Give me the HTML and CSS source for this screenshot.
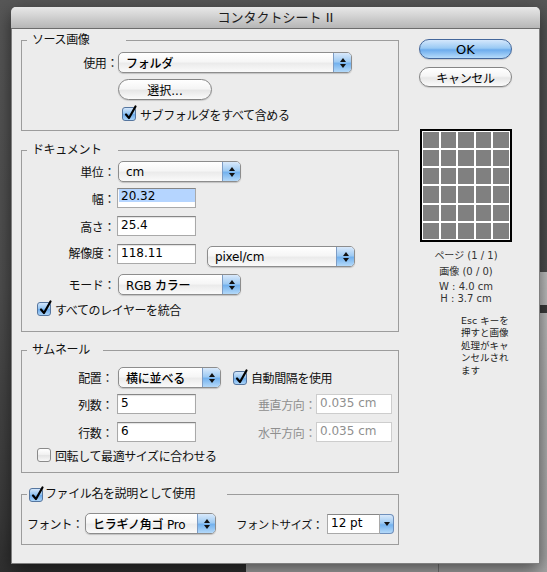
FILE: index.html
```html
<!DOCTYPE html>
<html lang="ja">
<head>
<meta charset="utf-8">
<title>コンタクトシート II</title>
<link rel="stylesheet" href="styles.css">
</head>
<body>
<div class="bgwin"><div class="bgbar"></div><div class="bgline"></div></div>
<div class="dialog">
  <div class="titlebar">コンタクトシート II</div>
  <div class="content">
    <div class="left">
      <fieldset class="grp g1">
        <legend class="lg lg1">ソース画像</legend>
        <div class="row r1a">
          <span class="lbl lbl-g1">使用：</span>
          <div class="popup w-use"><span class="val">フォルダ</span><span class="step"><i class="up"></i><i class="dn"></i></span></div>
        </div>
        <div class="row r1b"><div class="btn w-sel">選択...</div></div>
        <div class="row r1c">
          <span class="cb on"><svg width="14" height="16" viewBox="0 0 14 16"><path d="M3 9.5 L6 13 L12.5 1.5" fill="none" stroke="#000" stroke-width="2.2" stroke-linecap="round" stroke-linejoin="round"/></svg></span>
          <span class="ct">サブフォルダをすべて含める</span>
        </div>
      </fieldset>

      <fieldset class="grp g2">
        <legend class="lg lg2">ドキュメント</legend>
        <div class="row r2a">
          <span class="lbl">単位：</span>
          <div class="popup w-unit"><span class="val">cm</span><span class="step"><i class="up"></i><i class="dn"></i></span></div>
        </div>
        <div class="row r2b">
          <span class="lbl">幅：</span>
          <div class="inp"><span class="sel">20.32</span></div>
        </div>
        <div class="row r2c">
          <span class="lbl">高さ：</span>
          <div class="inp">25.4</div>
        </div>
        <div class="row r2d">
          <span class="lbl lbl-top">解像度：</span>
          <div class="inp">118.11</div>
          <div class="popup w-res"><span class="val">pixel/cm</span><span class="step"><i class="up"></i><i class="dn"></i></span></div>
        </div>
        <div class="row r2e">
          <span class="lbl">モード：</span>
          <div class="popup w-unit"><span class="val">RGB カラー</span><span class="step"><i class="up"></i><i class="dn"></i></span></div>
        </div>
        <div class="row r2f">
          <span class="cb on"><svg width="14" height="16" viewBox="0 0 14 16"><path d="M3 9.5 L6 13 L12.5 1.5" fill="none" stroke="#000" stroke-width="2.2" stroke-linecap="round" stroke-linejoin="round"/></svg></span>
          <span class="ct">すべてのレイヤーを統合</span>
        </div>
      </fieldset>

      <fieldset class="grp g3">
        <legend class="lg lg3">サムネール</legend>
        <div class="row r3a">
          <span class="lbl lbl-g3">配置：</span>
          <div class="popup w-place"><span class="val">横に並べる</span><span class="step"><i class="up"></i><i class="dn"></i></span></div>
          <span class="cb on cb-auto"><svg width="14" height="16" viewBox="0 0 14 16"><path d="M3 9.5 L6 13 L12.5 1.5" fill="none" stroke="#000" stroke-width="2.2" stroke-linecap="round" stroke-linejoin="round"/></svg></span>
          <span class="ct">自動間隔を使用</span>
        </div>
        <div class="row r3b">
          <span class="lbl lbl-g3">列数：</span>
          <div class="inp">5</div>
          <span class="lbl2">垂直方向：</span>
          <div class="inp dis">0.035 cm</div>
        </div>
        <div class="row r3c">
          <span class="lbl lbl-g3">行数：</span>
          <div class="inp">6</div>
          <span class="lbl2">水平方向：</span>
          <div class="inp dis">0.035 cm</div>
        </div>
        <div class="row r3d">
          <span class="cb off"></span>
          <span class="ct">回転して最適サイズに合わせる</span>
        </div>
      </fieldset>

      <fieldset class="grp g4">
        <legend class="lg lg4">
          <span class="cb on"><svg width="14" height="16" viewBox="0 0 14 16"><path d="M3 9.5 L6 13 L12.5 1.5" fill="none" stroke="#000" stroke-width="2.2" stroke-linecap="round" stroke-linejoin="round"/></svg></span>
          <span class="ct ct-lg">ファイル名を説明として使用</span>
        </legend>
        <div class="row r4a">
          <span class="lbl-font">フォント：</span>
          <div class="popup w-font"><span class="val">ヒラギノ角ゴ Pro</span><span class="step"><i class="up"></i><i class="dn"></i></span></div>
          <span class="lbl-size">フォントサイズ：</span>
          <div class="combo"><span class="combo-in">12 pt</span><span class="combo-btn"><i class="dn"></i></span></div>
        </div>
      </fieldset>
    </div>

    <div class="right">
      <div class="btn btn-ok">OK</div>
      <div class="btn btn-cancel">キャンセル</div>
      <div class="preview">
        <i></i><i></i><i></i><i></i><i></i>
        <i></i><i></i><i></i><i></i><i></i>
        <i></i><i></i><i></i><i></i><i></i>
        <i></i><i></i><i></i><i></i><i></i>
        <i></i><i></i><i></i><i></i><i></i>
        <i></i><i></i><i></i><i></i><i></i>
      </div>
      <div class="info info-page">ページ (1 / 1)</div>
      <div class="info info-img">画像 (0 / 0)</div>
      <div class="info info-w">W : 4.0 cm</div>
      <div class="info info-h">H : 3.7 cm</div>
      <div class="esc">Esc キーを<br>押すと画像<br>処理がキャ<br>ンセルされ<br>ます</div>
    </div>
  </div>
</div>
</body>
</html>
```

FILE: styles.css
```css
html, body {
  margin: 0;
  padding: 0;
}
body {
  width: 547px;
  height: 572px;
  overflow: hidden;
  position: relative;
  background: linear-gradient(#575757 0, #4e4e4e 50%, #3a3a3a 90%, #303030 100%);
  font-family: "DejaVu Sans", "Noto Sans CJK JP", sans-serif;
  font-size: 12px;
  color: #111;
}

/* background application window behind the dialog */
.bgwin {
  position: absolute;
  left: 246px;
  top: 272px;
  right: 0;
  bottom: 0;
  background: linear-gradient(#c4c4c4, #b4b4b4 40%, #a8a8a8);
}
.bgbar {
  position: absolute;
  left: 0;
  right: 0;
  top: 33px;
  height: 8px;
  background: #3c3c3c;
}
.bgline {
  position: absolute;
  left: 192px;
  top: 0;
  bottom: 0;
  width: 1px;
  background: #7a7a7a;
}

.dialog {
  position: relative;
  z-index: 1;
  margin: 7px 0 0 11px;
  width: 529px;
  height: 557px;
  box-sizing: border-box;
  background: #ececec;
  border: 1px solid #7f7f7f;
  border-top: none;
  border-radius: 5px 5px 0 0;
  box-shadow: 0 6px 18px rgba(0, 0, 0, 0.55);
}
.titlebar {
  height: 21px;
  border-bottom: 1px solid #6c6c6c;
  background: linear-gradient(#e8e8e8, #cfcfcf 50%, #b6b6b6);
  border-radius: 5px 5px 0 0;
  text-align: center;
  line-height: 21px;
  font-size: 13px;
  color: #1c1c1c;
  margin: 0 -1px;
}

.content {
  display: flex;
  padding-left: 9px;
}
.left {
  width: 378px;
  flex: none;
}
.right {
  width: 93px;
  margin-left: 20px;
  display: flex;
  flex-direction: column;
  flex: none;
}

/* group boxes */
.grp {
  margin: 0;
  padding: 0;
  border: 1px solid #9c9c9c;
  min-width: 0;
}
.lg {
  margin-left: 5px;
  padding: 0 0 0 5px;
  height: 15px;
  line-height: 15px;
  box-sizing: border-box;
  letter-spacing: -0.4px;
  white-space: nowrap;
}
.lg1 { width: 99px; }
.lg2 { width: 91px; }
.lg3 { width: 76px; }
.lg4 {
  width: 200px;
  padding-left: 2px;
  display: flex;
  align-items: center;
}
.g1 { margin-top: 4px; padding-bottom: 9px; }
.g2 { margin-top: 12px; padding-bottom: 15px; }
.g3 { margin-top: 11px; padding-bottom: 10px; }
.g4 { margin-top: 14px; padding-bottom: 10px; }

.row {
  display: flex;
  align-items: center;
}
.lbl {
  width: 96px;
  flex: none;
  box-sizing: border-box;
  text-align: right;
  padding-right: 3px;
  letter-spacing: -0.4px;
  white-space: nowrap;
}
.lbl-g1 { padding-right: 0; }
.lbl-g3 { padding-right: 5px; }

.r1a { margin-top: 4px; height: 21px; }
.r1b { margin-top: 6px; height: 21px; padding-left: 96px; }
.r1c { margin-top: 7px; height: 14px; padding-left: 100px; }

.r2a { margin-top: 3px; height: 21px; }
.r2b { margin-top: 6px; height: 20px; }
.r2c { margin-top: 8px; height: 20px; }
.r2d { margin-top: 8px; height: 23px; align-items: flex-start; }
.r2d .lbl-top { line-height: 20px; }
.r2d .popup { margin-top: 2px; margin-left: 11px; }
.r2e { margin-top: 7px; height: 21px; }
.r2f { margin-top: 7px; height: 14px; padding-left: 15px; }

.r3a { margin-top: 9px; height: 21px; }
.r3b { margin-top: 6px; height: 20px; }
.r3c { margin-top: 8px; height: 20px; }
.r3d { margin-top: 6px; height: 14px; padding-left: 15px; }

.r4a { margin-top: 11px; height: 21px; }

/* popup buttons */
.popup {
  height: 21px;
  box-sizing: border-box;
  border: 1px solid #8d8d8d;
  border-radius: 5px;
  background: linear-gradient(#ffffff, #f6f6f6 45%, #ebebeb 55%, #fafafa);
  box-shadow: 0 1px 1px rgba(0, 0, 0, 0.18);
  display: flex;
  align-items: center;
  padding-left: 7px;
  overflow: hidden;
  flex: none;
}
.popup .val {
  flex: 1;
  white-space: nowrap;
  color: #000;
  font-weight: 500;
  letter-spacing: -0.2px;
}
.step {
  width: 18px;
  align-self: stretch;
  box-sizing: border-box;
  background: linear-gradient(#d9e9fb, #9fcbf3 45%, #74b2ee 55%, #b4d9f9);
  border-left: 1px solid #7d9cc4;
  display: flex;
  flex-direction: column;
  align-items: center;
  justify-content: center;
  gap: 2px;
  flex: none;
}
.up {
  width: 0;
  height: 0;
  border-left: 3px solid transparent;
  border-right: 3px solid transparent;
  border-bottom: 4px solid #111;
}
.dn {
  width: 0;
  height: 0;
  border-left: 3px solid transparent;
  border-right: 3px solid transparent;
  border-top: 4px solid #111;
}
.w-use { width: 234px; }
.w-unit { width: 123px; }
.w-res { width: 148px; }
.w-place { width: 103px; }
.w-font { width: 131px; }

/* text fields */
.inp {
  width: 79px;
  height: 20px;
  box-sizing: border-box;
  margin-left: -1px;
  border: 1px solid #a9a9a9;
  border-top-color: #868686;
  background: #fff;
  box-shadow: inset 0 1px 1px rgba(0, 0, 0, 0.12);
  padding-left: 3px;
  line-height: 16px;
  color: #000;
  white-space: nowrap;
  flex: none;
}
.inp .sel {
  display: block;
  margin-left: -2px;
  margin-right: 0;
  padding-left: 2px;
  height: 13px;
  line-height: 14px;
  background: #b5d5ff;
}
.inp.dis {
  width: 76px;
  margin-left: 0;
  border-color: #cdcdcd;
  box-shadow: none;
  color: #8f8f8f;
}
.lbl2 {
  width: 120px;
  flex: none;
  text-align: right;
  color: #8f8f8f;
  letter-spacing: -0.4px;
  white-space: nowrap;
}

/* checkboxes */
.cb {
  width: 14px;
  height: 14px;
  box-sizing: border-box;
  border: 1px solid #56769f;
  border-radius: 3px;
  background: linear-gradient(#d3e6fb, #95c5f1 45%, #6eacec 55%, #acd5f9);
  position: relative;
  flex: none;
}
.cb svg {
  position: absolute;
  left: 0;
  top: -3px;
}
.cb.off {
  border-color: #8a8a8a;
  background: linear-gradient(#ffffff, #f2f2f2 45%, #e4e4e4 55%, #f8f8f8);
}
.ct {
  margin-left: 4px;
  letter-spacing: -0.4px;
  white-space: nowrap;
}
.ct-lg { margin-left: 2px; }
.cb-auto { margin-left: 12px; }

.lbl-font {
  width: 63px;
  flex: none;
  box-sizing: border-box;
  padding-left: 5px;
  letter-spacing: -0.8px;
  white-space: nowrap;
}
.lbl-size {
  width: 91px;
  margin-left: 20px;
  flex: none;
  font-size: 11.5px;
  letter-spacing: -0.6px;
  white-space: nowrap;
}
.combo {
  display: flex;
  height: 20px;
  flex: none;
}
.combo-in {
  width: 53px;
  box-sizing: border-box;
  border: 1px solid #a9a9a9;
  border-top-color: #868686;
  background: #fff;
  padding-left: 3px;
  line-height: 17px;
  color: #000;
}
.combo-btn {
  width: 14px;
  box-sizing: border-box;
  border: 1px solid #6f8fbb;
  border-left: none;
  border-radius: 0 4px 4px 0;
  background: linear-gradient(#d9e9fb, #9fcbf3 45%, #74b2ee 55%, #b4d9f9);
  display: flex;
  align-items: center;
  justify-content: center;
}

/* push buttons */
.btn {
  height: 21px;
  box-sizing: border-box;
  border: 1px solid #858585;
  border-radius: 11px;
  background: linear-gradient(#ffffff, #f5f5f5 45%, #e7e7e7 55%, #fbfbfb);
  box-shadow: 0 1px 1px rgba(0, 0, 0, 0.15);
  display: flex;
  align-items: center;
  justify-content: center;
  color: #000;
  flex: none;
}
.w-sel { width: 94px; }
.btn-ok {
  margin-top: 10px;
  height: 20px;
  font-size: 13px;
  border-color: #44679b;
  background: linear-gradient(#d4e7fc, #9acaf4 45%, #6daced 55%, #b7dcfb);
}
.btn-cancel {
  margin-top: 8px;
  height: 20px;
  letter-spacing: -0.3px;
}

/* preview */
.preview {
  margin: 42px 0 0 1px;
  width: 92px;
  height: 113px;
  box-sizing: border-box;
  border: 2px solid #000;
  background: #fff;
  padding: 1px;
  display: grid;
  grid-template-columns: repeat(5, 1fr);
  grid-template-rows: repeat(6, 1fr);
  gap: 2px;
}
.preview i {
  background: #808080;
}
.info {
  text-align: center;
  margin-left: 1px;
  width: 92px;
  font-size: 10px;
  color: #333;
  white-space: nowrap;
}
.info-page { margin-top: 7px; line-height: 14px; }
.info-img { margin-top: 2px; line-height: 14px; }
.info-w { margin-top: 2px; line-height: 12px; }
.info-h { line-height: 12px; }
.esc {
  margin: 10px 0 0 42px;
  font-size: 9.5px;
  line-height: 12.4px;
  color: #222;
  white-space: nowrap;
}
```
